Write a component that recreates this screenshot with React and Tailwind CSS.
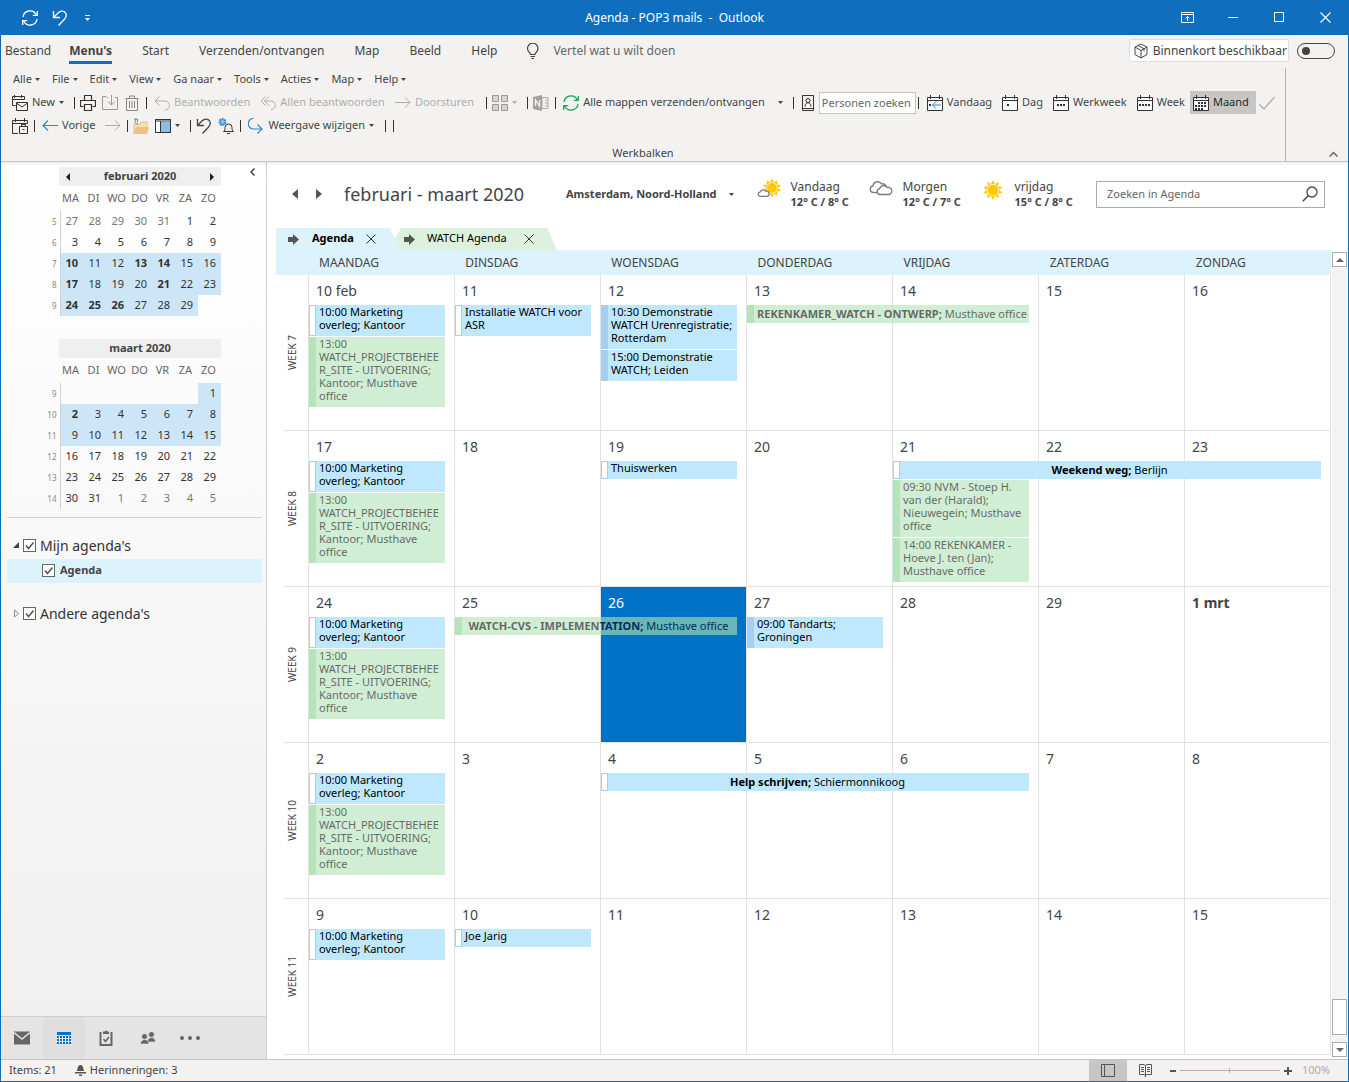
// ===== App.jsx =====
import React, { useState } from 'react';

/* ---------- icons ---------- */

function Icon({ size = 16, children, className = '' }) {
  return (
    <svg
      width={size}
      height={size}
      viewBox="0 0 16 16"
      fill="none"
      stroke="currentColor"
      strokeWidth="1"
      className={`shrink-0 ${className}`}
      aria-hidden="true"
    >
      {children}
    </svg>
  );
}

function Caret({ className = '' }) {
  return (
    <svg width="5" height="3" viewBox="0 0 5 3" className={`shrink-0 ${className}`} aria-hidden="true">
      <path d="M0 0h5L2.5 3z" fill="currentColor" />
    </svg>
  );
}

function SyncIcon({ className = '', size = 16 }) {
  return (
    <Icon size={size} className={className}>
      <g strokeWidth="1.3">
        <path d="M1 7A7 7 0 0 1 14.3 5M15.3 1v4.4h-4.5M15 9A7 7 0 0 1 1.7 11M.7 15v-4.4h4.5" />
      </g>
    </Icon>
  );
}

function UndoIcon({ className = '' }) {
  return (
    <Icon className={className}>
      <path d="M1.5 1v6.500h6.500M1.800 7.200L6 3C8.500.5 12 .5 13.600 3c1.500 2.500.4 4.500-1.200 6.200L6.500 15.500" strokeWidth="1.300" />
    </Icon>
  );
}

// Calendar frame shared by the Vandaag/Dag/Week/Maand buttons
function CalIcon({ children }) {
  return (
    <Icon className="text-[#333]">
      <path d="M1 3h14v12H1z" fill="#fafafa" stroke="none" />
      <path d="M.5 2.500h15v13H.5zM.5 5.500h15M3.500 0v4M12.500 0v4" />
      {children}
    </Icon>
  );
}

const dots = (coords) =>
  coords.map(([x, y]) => <rect key={`${x}-${y}`} x={x} y={y} width="2" height="2" fill="#333" stroke="none" />);

function ReplyIcon({ all }) {
  return (
    <Icon>
      {all && <path d="M5.500 1.500L1 6l4.500 4.500" />}
      <path d={all ? 'M9 1.500L4.500 6 9 10.500M4.500 6H11a4 4 0 0 1 0 8.500' : 'M5.500 1.500L1 6l4.500 4.500M1 6h10a4.200 4.200 0 0 1 0 9'} />
    </Icon>
  );
}

function SunShape({ cx, cy, r }) {
  const rays = Array.from({ length: 10 }, (_, i) => i * 36);
  return (
    <g fill="#ffc805" stroke="none">
      {rays.map((a) => (
        <path key={a} d={`M${cx - 2} ${cy - r}L${cx} ${cy - r - 4}L${cx + 2} ${cy - r}z`} transform={`rotate(${a} ${cx} ${cy})`} />
      ))}
      <circle cx={cx} cy={cy} r={r - 0.5} />
    </g>
  );
}

function WeatherIcon({ kind }) {
  return (
    <svg width="24" height="22" viewBox="0 0 24 22" fill="none" stroke="#777" strokeWidth="1.300" className="shrink-0" aria-hidden="true">
      {kind === 'partly' && (
        <>
          <SunShape cx={15} cy={9} r={5.5} />
          <path d="M3 17.300a2.300 2.300 0 0 1 .3-4.500 3.200 3.200 0 0 1 5.600-.6 2.600 2.600 0 0 1 1.200 5.100z" fill="#fff" />
        </>
      )}
      {kind === 'cloud' && (
        <>
          <path d="M4 13.500a3.300 3.300 0 0 1 0-6.500 4.600 4.600 0 0 1 8.500-2 3.600 3.600 0 0 1 4.800 3.500" />
          <path d="M4 13.500h5" />
          <path d="M10.500 15.500a2.900 2.900 0 0 1 0-5.700 4.300 4.300 0 0 1 7.800-1.300 3.600 3.600 0 0 1 1.800 7z" fill="#fff" />
        </>
      )}
      {kind === 'sun' && <SunShape cx={12} cy={11} r={6} />}
    </svg>
  );
}

/* ---------- title bar + ribbon ---------- */

function TitleBar() {
  return (
    <header className="grid h-[35px] grid-cols-[1fr_auto_1fr] items-center bg-[#106ebe] text-white">
      <div className="flex items-center pl-[21px] pt-px">
        <button aria-label="Synchroniseren" className="mr-3.5"><SyncIcon /></button>
        <button aria-label="Ongedaan maken" className="mr-[17px]"><UndoIcon /></button>
        <button aria-label="Werkbalk aanpassen">
          <svg width="5" height="6" viewBox="0 0 5 6"><path d="M0 0h5v1H0zM0 3h5L2.500 6z" fill="#fff" /></svg>
        </button>
      </div>
      <h1 className="whitespace-pre text-[12px]">Agenda - POP3 mails  -  Outlook</h1>
      <div className="flex justify-end text-white">
        <button aria-label="Lint weergeven" className="flex w-[46px] justify-center">
          <svg width="13" height="11" viewBox="0 0 13 11" fill="none" stroke="#fff"><path d="M.5.5h12v10H.5zM.5 2.500h12M6.500 9V4.500M4.500 6.500l2-2 2 2" /></svg>
        </button>
        <button aria-label="Minimaliseren" className="flex w-[46px] items-center justify-center">
          <svg width="10" height="1"><path d="M0 .5h10" stroke="#fff" /></svg>
        </button>
        <button aria-label="Maximaliseren" className="flex w-[46px] justify-center">
          <svg width="10" height="10" fill="none"><path d="M.5.5h9v9h-9z" stroke="#fff" /></svg>
        </button>
        <button aria-label="Sluiten" className="flex w-[46px] justify-center">
          <svg width="11" height="11" fill="none"><path d="M.5.5l10 10M10.500.5l-10 10" stroke="#fff" strokeWidth="1.100" /></svg>
        </button>
      </div>
    </header>
  );
}

const TABS = ['Start', 'Verzenden/ontvangen', 'Map', 'Beeld', 'Help'];
const MENUS = ['Alle', 'File', 'Edit', 'View', 'Ga naar', 'Tools', 'Acties', 'Map', 'Help'];

function Sep() {
  return (
    <span className="flex w-[6px] justify-center">
      <span className="h-3 w-px bg-[#333]" />
    </span>
  );
}

function Tool({ icon, label, caret, disabled, name, className = '' }) {
  return (
    <button
      aria-label={label ? undefined : name}
      disabled={disabled}
      className={`flex h-[23px] items-center gap-1 whitespace-nowrap ${label ? 'px-[5px]' : 'px-[3px]'} ${disabled ? 'text-[#b0aeac]' : 'text-[#444]'} ${className}`}
    >
      {icon}
      {label}
      {caret && <Caret />}
    </button>
  );
}

function Ribbon() {
  const [soon, setSoon] = useState(false);
  return (
    <section className="relative z-20 border-b border-[#c8c6c4] bg-[#f3f2f1] text-[11px] text-[#444] shadow-[0_1px_4px_rgba(0,0,0,0.12)]">
      <div className="flex h-[33px] items-center pb-0.5 pl-1 pr-[13px] text-[12px]">
        <nav className="flex items-center gap-[30px]">
          <div className="flex gap-[18px]">
            <button>Bestand</button>
            <button className="border-b-[3px] border-[#106ebe] pt-[3px] font-bold leading-5">Menu&apos;s</button>
          </div>
          {TABS.map((t) => <button key={t}>{t}</button>)}
        </nav>
        <label className="ml-7 flex flex-1 items-center gap-3">
          <Icon>
            <path d="M5.500 11.500C5.500 9.500 2.500 9 2.500 5.500a5.200 5.200 0 0 1 10.500 0c0 3.500-3 4-3 6zM5.500 13.500H10M6.500 15.500H9" strokeWidth="1.200" />
          </Icon>
          <input placeholder="Vertel wat u wilt doen" className="w-[180px] bg-transparent outline-none placeholder:text-[#666]" />
        </label>
        <label htmlFor="soon" className="mr-2 flex h-[23px] items-center gap-1 rounded-[2px] border border-[#e1dfdd] bg-white pl-[3px] pr-px">
          <Icon>
            <path d="M8 1l6 3v7.500L8 15l-6-3.500V4zM2 4l6 3.500L14 4M8 7.500V15M5 2.500l6 3.200v2.500" />
          </Icon>
          Binnenkort beschikbaar
        </label>
        <input
          id="soon"
          type="checkbox"
          role="switch"
          checked={soon}
          onChange={(e) => setSoon(e.target.checked)}
          className="h-4 w-[38px] appearance-none rounded-full border border-[#444] pl-1 before:mt-[3px] before:block before:size-2 before:rounded-full before:bg-[#444]"
        />
      </div>

      <div className="flex">
        <div className="min-w-0 flex-1 border-r border-[#b3b0ad]">
          <div className="flex h-[23px] items-center gap-3 pl-3">
            {MENUS.map((m) => (
              <button key={m} className="flex items-center gap-[3px]">{m}<Caret /></button>
            ))}
          </div>

          <div className="flex h-[23px] items-center pl-1.5">
            <Tool label="New" caret icon={
              <Icon className="text-[#333]">
                <path d="M3.500 10.500h-3v-9h12v3M.5 4.500h12M2.500 0v3M9.500 0v3M4.500 7.500h11v8h-11zM4.500 8l5.500 4 5.500-4" />
              </Icon>
            } />
            <span className="w-0.5" />
            <Sep />
            <Tool name="Afdrukken" icon={
              <Icon className="text-[#333]">
                <path d="M3.500 11.500h-3v-6h15v6h-3M4.500 5V.5h7V5M4.500 9.500h7v6h-7z" strokeWidth="1.200" />
              </Icon>
            } />
            <Tool name="Verplaatsen" disabled icon={
              <Icon className="text-[#999]"><path d="M6 2.500H5l-1-1H.5v13h15v-12H13M9.500 0v10M6 6.500l3.500 3.500L13 6.500" /></Icon>
            } />
            <Tool name="Verwijderen" disabled icon={
              <Icon className="text-[#888]"><path d="M2.500 3.500h11v12h-11zM1.500 3.500h13M5.500 3V1h5v2M5.500 6v7M8 6v7M10.500 6v7" /></Icon>
            } />
            <Sep />
            <Tool label="Beantwoorden" disabled icon={<ReplyIcon />} />
            <Tool label="Allen beantwoorden" disabled icon={<ReplyIcon all />} />
            <Tool label="Doorsturen" disabled icon={<Icon><path d="M0 7.500h15M10 2.500l5 5-5 5" /></Icon>} />
            <span className="w-1" />
            <Sep />
            <Tool name="Categorie" disabled caret icon={
              <Icon><path d="M.5.5h6v6h-6zM9.500.5h6v6h-6zM.5 9.500h6v6h-6zM9.500 9.500h6v6h-6z" fill="#d6d4d2" stroke="#999" /></Icon>
            } />
            <span className="w-1" />
            <Sep />
            <Tool name="OneNote" disabled icon={
              <Icon>
                <path d="M9 2.500h6v11H9zM12 5h3M12 8h3M12 11h3" />
                <path d="M0 2l9-2v16l-9-2z" fill="#a3a1a0" stroke="none" />
                <path d="M2.500 11V5l4 6V5" stroke="#f3f2f1" strokeWidth="1.300" />
              </Icon>
            } />
            <Sep />
            <Tool label="Alle mappen verzenden/ontvangen" icon={<SyncIcon className="text-[#21a452]" />} />
            <Caret className="mx-2" />
            <Sep />
            <Tool name="Adresboek" icon={
              <Icon className="text-[#333]">
                <path d="M2.500.5h11v15h-11zM2.500 13.500h11M5 11.500c0-5 6-5 6 0" />
                <circle cx="8" cy="5.500" r="2" />
              </Icon>
            } />
            <input aria-label="Personen zoeken" placeholder="Personen zoeken" className="h-[22px] w-[97px] border border-[#c8c6c4] bg-white px-0.5 outline-none placeholder:text-[#666]" />
            <Sep />
            <Tool label="Vandaag" icon={
              <CalIcon>
                {dots([[2, 9]])}
                <path d="M14 10H5.500M9 6.500L5.500 10 9 13.500" stroke="#2b88d8" />
              </CalIcon>
            } />
            <Tool label="Dag" icon={<CalIcon>{dots([[5, 9]])}</CalIcon>} />
            <Tool label="Werkweek" icon={<CalIcon>{dots([[4, 9], [7, 9], [10, 9]])}</CalIcon>} />
            <Tool label="Week" icon={<CalIcon>{dots([[2, 9], [5, 9], [8, 9], [11, 9]])}</CalIcon>} />
            <Tool label="Maand" className="bg-[#c8c6c4] !pl-[3px] !pr-[7px] !text-[#262626]" icon={
              <CalIcon>{dots([[5, 7], [8, 7], [11, 7], [2, 10], [5, 10], [8, 10], [11, 10], [2, 13], [5, 13], [8, 13]])}</CalIcon>
            } />
            <Tool name="Gereed" disabled icon={<Icon><path d="M0 9l5 5L15.500 2" strokeWidth="1.300" /></Icon>} />
          </div>

          <div className="flex h-[23px] items-center pl-2">
            <Tool name="Afspraak" icon={
              <Icon className="text-[#333]">
                <path d="M6 15.500H.5v-13h15v3M.5 5.500h15M3.500 0v4M12.500 0v4M7.500 8.500h8v7h-8zM9.500 8.500v-2h4v2M10.500 11.500h2" />
              </Icon>
            } />
            <Sep />
            <Tool label="Vorige" icon={<Icon className="text-[#2b88d8]"><path d="M16 7.500H1M6 2.500l-5 5 5 5" strokeWidth="1.200" /></Icon>} />
            <Tool name="Volgende" disabled className="ml-0.5" icon={<Icon><path d="M0 7.500h15M10 2.500l5 5-5 5" /></Icon>} />
            <Sep />
            <Tool name="Map openen" icon={
              <Icon>
                <path d="M1 6v9h13V4H8L6.500 6z" fill="#f7dfb0" stroke="#eac282" />
                <path d="M3 9h13l-2 7H0z" fill="#eac282" stroke="none" />
                <path d="M5 6C2 6 1.500 3 3 1M1 1h3.500v3" stroke="#4c9a73" />
              </Icon>
            } />
            <Tool name="Leesvenster" caret icon={
              <Icon className="text-[#333]">
                <path d="M.5 1.500h15v13H.5z" fill="#fff" />
                <path d="M6 4h9v10H6z" fill="#83beec" stroke="none" />
                <path d="M.5 1.500h15v13H.5zM1 3h14M5.500 3v11" />
              </Icon>
            } />
            <span className="w-1" />
            <Sep />
            <Tool name="Ongedaan maken" icon={<UndoIcon />} />
            <Tool name="Herinneringen" icon={
              <Icon className="text-[#333]">
                <circle cx="4.500" cy="4" r="3" stroke="#2b88d8" strokeWidth="2" strokeDasharray="1.800 .8" fill="#83beec" />
                <path d="M5.500 13.500c1.500-1 1.500-2 1.500-4a3.500 3.500 0 0 1 7 0c0 2 0 3 1.500 4zM9 15.500h3" fill="#f3f2f1" />
              </Icon>
            } />
            <Sep />
            <Tool label="Weergave wijzigen" caret icon={
              <Icon className="text-[#2b88d8]"><path d="M5.500.5a4.500 4.500 0 0 0 0 10.500H14M9.500 6.500L14 11l-4.500 4.500" strokeWidth="1.200" /></Icon>
            } />
            <span className="flex gap-0.5 pl-1"><Sep /><Sep /></span>
          </div>

          <p className="mt-2 h-4 text-center text-[11px] leading-4">Werkbalken</p>
        </div>
        <div className="flex w-[62px] items-end justify-end pb-1 pr-2.5">
          <button aria-label="Lint samenvouwen">
            <svg width="9" height="6" fill="none"><path d="M.5 5.500l4-4 4 4" stroke="#666" strokeWidth="1.500" /></svg>
          </button>
        </div>
      </div>
    </section>
  );
}

/* ---------- sidebar ---------- */

const WEEKDAYS = ['MA', 'DI', 'WO', 'DO', 'VR', 'ZA', 'ZO'];

const FEB = [
  { week: 5, days: [27, 28, 29, 30, 31, 1, 2], out: [0, 1, 2, 3, 4] },
  { week: 6, days: [3, 4, 5, 6, 7, 8, 9] },
  { week: 7, days: [10, 11, 12, 13, 14, 15, 16], sel: true, bold: [0, 3, 4] },
  { week: 8, days: [17, 18, 19, 20, 21, 22, 23], sel: true, bold: [0, 4] },
  { week: 9, days: [24, 25, 26, 27, 28, 29, ''], sel: true, bold: [0, 1, 2] },
];

const MRT = [
  { week: 9, days: ['', '', '', '', '', '', 1], sel: true },
  { week: 10, days: [2, 3, 4, 5, 6, 7, 8], sel: true, bold: [0] },
  { week: 11, days: [9, 10, 11, 12, 13, 14, 15], sel: true },
  { week: 12, days: [16, 17, 18, 19, 20, 21, 22] },
  { week: 13, days: [23, 24, 25, 26, 27, 28, 29] },
  { week: 14, days: [30, 31, 1, 2, 3, 4, 5], out: [2, 3, 4, 5, 6] },
];

function MiniMonth({ title, weeks, nav }) {
  return (
    <div className="pl-[38px] text-[11px] text-[#333]">
      <div className="ml-5 flex h-[19px] w-[162px] items-center justify-between bg-[#efefef] px-[7px] font-bold text-[#444]">
        {nav ? <button aria-label="Vorige maand"><svg width="4" height="8"><path d="M4 0v8L0 4z" fill="#222" /></svg></button> : <span />}
        <span>{title}</span>
        {nav ? <button aria-label="Volgende maand"><svg width="4" height="8"><path d="M0 0v8l4-4z" fill="#222" /></svg></button> : <span />}
      </div>
      <table className="w-[182px] table-fixed border-collapse">
        <thead>
          <tr className="h-[25px] text-[#666]">
            <th className="w-[21px]" />
            {WEEKDAYS.map((d) => <th key={d} className="w-[23px] pr-0.5 text-center font-normal">{d}</th>)}
          </tr>
        </thead>
        <tbody>
          {weeks.map((w) => (
            <tr key={w.week} className="h-[21px]">
              <th className="border-r border-[#d0d0d0] pr-[3px] text-right text-[8px] font-normal text-[#888]">{w.week}</th>
              {w.days.map((d, i) => (
                <td
                  key={i}
                  className={`pr-[5px] text-right ${w.sel && d !== '' ? 'bg-[#cde6f7]' : ''} ${w.bold?.includes(i) ? 'font-bold' : ''} ${w.out?.includes(i) ? 'text-[#777]' : ''}`}
                >
                  {d}
                </td>
              ))}
            </tr>
          ))}
        </tbody>
      </table>
    </div>
  );
}

function CheckBox({ id }) {
  const [on, setOn] = useState(true);
  return (
    <span className="grid size-[13px] shrink-0">
      <input
        id={id}
        type="checkbox"
        checked={on}
        onChange={(e) => setOn(e.target.checked)}
        className="col-start-1 row-start-1 size-[13px] appearance-none border border-[#666] bg-white"
      />
      {on && (
        <svg width="13" height="13" fill="none" className="pointer-events-none col-start-1 row-start-1" aria-hidden="true">
          <path d="M3 6.500l2.500 3L10.500 3.500" stroke="#555" strokeWidth="1.500" />
        </svg>
      )}
    </span>
  );
}

function Sidebar() {
  return (
    <aside className="flex w-[266px] shrink-0 flex-col border-r border-[#d0d0d0] bg-linear-to-b from-white to-[#efefef]">
      <div className="flex items-start justify-between">
        <div className="flex flex-col gap-[23px] pt-[5px]">
          <MiniMonth title="februari 2020" weeks={FEB} nav />
          <MiniMonth title="maart 2020" weeks={MRT} />
        </div>
        <button aria-label="Mappenvenster minimaliseren" className="mr-[11px] mt-1.5">
          <svg width="5" height="8" fill="none"><path d="M4.500 .5L1 4l3.500 3.500" stroke="#444" strokeWidth="1.500" /></svg>
        </button>
      </div>

      <div className="ml-1.5 mr-1 mt-2 flex-1 border-t border-[#d0d0d0] pt-[15px] text-[14px] text-[#333]">
        <div className="flex h-[26px] items-center gap-1 pb-0.5 pl-1.5">
          <svg width="6" height="6"><path d="M6 0v6H0z" fill="#444" /></svg>
          <CheckBox id="mine" />
          <label htmlFor="mine">Mijn agenda&apos;s</label>
        </div>
        <div className="flex h-6 items-center gap-[5px] bg-[#dcf2fd] pb-px pl-[35px] text-[11px] font-bold text-[#444]">
          <CheckBox id="agenda" />
          <label htmlFor="agenda">Agenda</label>
        </div>
        <div className="mt-[18px] flex h-[26px] items-center gap-1 pb-0.5 pl-1.5">
          <svg width="6" height="9" fill="none"><path d="M1.500 1v7L5.500 4.500z" stroke="#888" /></svg>
          <CheckBox id="other" />
          <label htmlFor="other">Andere agenda&apos;s</label>
        </div>
      </div>

      <nav className="flex h-[43px] border-t border-[#d0d0d0] bg-[#e4e4e4] text-[#666]">
        <button aria-label="E-mail" className="flex w-[42px] items-center justify-center">
          <Icon><path d="M0 1.500h16v13H0z" fill="#666" stroke="none" /><path d="M0 2.500l8 6.500 8-6.500" stroke="#e4e4e4" strokeWidth="1.500" /></Icon>
        </button>
        <button aria-label="Agenda" className="flex w-[42px] items-center justify-center bg-[#dfdfdf]">
          <svg width="14" height="12" fill="#0072c6">
            <path d="M0 0h14v3H0z" />
            {[4, 7, 10].map((y) => [0, 3, 6, 9, 12].map((x) => <rect key={`${x}-${y}`} x={x} y={y} width="2" height="2" />))}
          </svg>
        </button>
        <button aria-label="Taken" className="flex w-[42px] items-center justify-center">
          <Icon>
            <path d="M2.500 2v13h11V2" strokeWidth="2" />
            <path d="M5 4V1.500h2a1 1 0 0 1 2 0h2V4z" fill="#666" stroke="none" />
            <path d="M5.500 9l2 2.500L11 7" strokeWidth="1.500" />
          </Icon>
        </button>
        <button aria-label="Personen" className="flex w-[42px] items-center justify-center">
          <Icon>
            <g fill="#666" stroke="#e4e4e4" strokeWidth=".6">
              <circle cx="11.500" cy="4.500" r="2.800" /><path d="M7.500 12c0-6 8-6 8 0z" />
              <circle cx="4.500" cy="6.500" r="2.800" /><path d="M.5 14c0-6 8.500-6 8.500 0z" />
            </g>
          </Icon>
        </button>
        <button aria-label="Meer" className="flex w-[42px] items-center justify-center">
          <svg width="20" height="4" fill="#666"><circle cx="2" cy="2" r="2" /><circle cx="10" cy="2" r="2" /><circle cx="18" cy="2" r="2" /></svg>
        </button>
      </nav>
    </aside>
  );
}

/* ---------- calendar ---------- */

const DAYNAMES = ['MAANDAG', 'DINSDAG', 'WOENSDAG', 'DONDERDAG', 'VRIJDAG', 'ZATERDAG', 'ZONDAG'];

const marketing = { text: '10:00 Marketing\noverleg; Kantoor', kind: 'free' };
const project = {
  text: '13:00\nWATCH_PROJECTBEHEE\nR_SITE - UITVOERING;\nKantoor; Musthave\noffice',
  kind: 'green',
};
const monday = { place: 'col-start-1 row-span-2', events: [marketing, project] };

const WEEKS = [
  {
    name: 'WEEK 7',
    days: ['10 feb', '11', '12', '13', '14', '15', '16'],
    lanes: [
      monday,
      { place: 'col-start-2 row-span-2', events: [{ text: 'Installatie WATCH voor\nASR', kind: 'free' }] },
      {
        place: 'col-start-3 row-span-2',
        events: [
          { text: '10:30 Demonstratie\nWATCH Urenregistratie;\nRotterdam', kind: 'busy' },
          { text: '15:00 Demonstratie\nWATCH; Leiden', kind: 'busy' },
        ],
      },
      { place: 'col-start-4 col-span-2', events: [{ title: 'REKENKAMER_WATCH - ONTWERP;', text: ' Musthave office', kind: 'green' }] },
    ],
  },
  {
    name: 'WEEK 8',
    days: ['17', '18', '19', '20', '21', '22', '23'],
    lanes: [
      monday,
      { place: 'col-start-3 row-span-2', events: [{ text: 'Thuiswerken', kind: 'free' }] },
      { place: 'col-start-5 col-span-3', events: [{ title: 'Weekend weg;', text: ' Berlijn', kind: 'free', center: true }] },
      {
        place: 'col-start-5 row-start-2',
        events: [
          { text: '09:30 NVM - Stoep H.\nvan der (Harald);\nNieuwegein; Musthave\noffice', kind: 'green' },
          { text: '14:00 REKENKAMER -\nHoeve J. ten (Jan);\nMusthave office', kind: 'green' },
        ],
      },
    ],
  },
  {
    name: 'WEEK 9',
    days: ['24', '25', '26', '27', '28', '29', '1 mrt'],
    today: 2,
    lanes: [
      monday,
      { place: 'col-start-2 col-span-2', events: [{ title: 'WATCH-CVS - IMPLEMENTATION;', text: ' Musthave office', kind: 'green', center: true }] },
      { place: 'col-start-4 row-span-2', events: [{ text: '09:00 Tandarts;\nGroningen', kind: 'busy' }] },
    ],
  },
  {
    name: 'WEEK 10',
    days: ['2', '3', '4', '5', '6', '7', '8'],
    lanes: [
      monday,
      { place: 'col-start-3 col-span-3', events: [{ title: 'Help schrijven;', text: ' Schiermonnikoog', kind: 'free', center: true }] },
    ],
  },
  {
    name: 'WEEK 11',
    days: ['9', '10', '11', '12', '13', '14', '15'],
    lanes: [
      { place: 'col-start-1 row-span-2', events: [marketing] },
      { place: 'col-start-2 row-span-2', events: [{ text: 'Joe Jarig', kind: 'free' }] },
    ],
  },
];

const KINDS = {
  free: { box: 'bg-[#bfe8fe]', bar: 'border border-[#a6cdf2] bg-white' },
  busy: { box: 'bg-[#bfe8fe]', bar: 'bg-[#a6cdf2]' },
  green: { box: 'bg-[#b1e3b6] opacity-60', bar: 'bg-[#87d28c]' },
};

function Event({ event }) {
  const kind = KINDS[event.kind];
  return (
    <article className={`flex text-[11px] leading-[13px] text-black ${kind.box}`}>
      <span className={`w-[7px] shrink-0 ${kind.bar}`} />
      <p
        className={`mr-px min-w-0 flex-1 overflow-hidden whitespace-pre pl-[3px] ${event.title ? 'py-[3px] leading-3' : 'pb-[5px]'} ${event.center ? 'pr-1 text-center' : ''}`}
      >
        {event.title && <b>{event.title}</b>}
        {event.text}
      </p>
    </article>
  );
}

function Week({ week }) {
  return (
    <div className="grid min-h-[156px] grid-cols-[25px_1fr] border-b border-r border-[#e1e1e1]">
      <div className="row-start-1 flex items-center justify-center pr-1.5">
        <span className="rotate-180 text-[10px] text-[#444] [writing-mode:vertical-rl]">{week.name}</span>
      </div>
      <div className="col-start-2 row-start-1 grid grid-cols-7">
        {week.days.map((d, i) => (
          <div
            key={d}
            className={`border-l border-[#e1e1e1] pl-[7px] pt-1.5 text-[14px] leading-5 ${week.today === i ? 'bg-[#0072c6] text-white' : 'text-[#444]'} ${d.includes('mrt') ? 'font-bold' : ''}`}
          >
            {d}
          </div>
        ))}
      </div>
      <div className="col-start-2 row-start-1 grid grid-cols-7 grid-rows-[19px_1fr] pt-[30px]">
        {week.lanes.map((lane) => (
          <div key={lane.place} className={`flex min-w-0 flex-col gap-px pl-px pr-[9px] ${lane.place.includes('row-start') ? '' : 'row-start-1'} ${lane.place}`}>
            {lane.events.map((e) => <Event key={e.text} event={e} />)}
          </div>
        ))}
      </div>
    </div>
  );
}

function TabArrow() {
  return (
    <svg width="11" height="11" aria-hidden="true"><path d="M0 3h5V0l6 5.500L5 11V8H0z" fill="#555" /></svg>
  );
}

function CloseX() {
  return (
    <svg width="10" height="10" fill="none"><path d="M.5.5l9 9M9.500.5l-9 9" stroke="#333" /></svg>
  );
}

const WEATHER = [
  { day: 'Vandaag', temp: '12° C / 8° C', kind: 'partly' },
  { day: 'Morgen', temp: '12° C / 7° C', kind: 'cloud' },
  { day: 'vrijdag', temp: '15° C / 8° C', kind: 'sun' },
];

function CalendarHeader() {
  return (
    <div className="flex h-[66px] items-center pb-0.5 pl-[25px] pr-[23px]">
      <button aria-label="Vorige periode" className="mr-[18px]"><svg width="6" height="10"><path d="M6 0v10L0 5z" fill="#555" /></svg></button>
      <button aria-label="Volgende periode" className="mr-[22px]"><svg width="6" height="10"><path d="M0 0v10l6-5z" fill="#555" /></svg></button>
      <h2 className="w-[222px] whitespace-nowrap text-[18px] text-[#444]">februari - maart 2020</h2>
      <button className="flex items-center gap-3 whitespace-nowrap text-[11px] font-bold text-[#444]">Amsterdam, Noord-Holland <Caret /></button>
      <div className="ml-[23px] flex">
        {WEATHER.map((w) => (
          <div key={w.day} className="flex w-[112px] gap-2.5 whitespace-nowrap">
            <WeatherIcon kind={w.kind} />
            <div className="text-[12px] leading-[15px] text-[#444]">
              <div>{w.day}</div>
              <div className="text-[11px] font-bold">{w.temp}</div>
            </div>
          </div>
        ))}
      </div>
      <div className="ml-auto flex h-[27px] w-[229px] items-center border border-[#a3acba] pl-2.5 pr-1.5">
        <input aria-label="Zoeken in Agenda" placeholder="Zoeken in Agenda" className="min-w-0 flex-1 text-[11px] outline-none placeholder:text-[#666]" />
        <button aria-label="Zoeken">
          <Icon><circle cx="10" cy="6" r="5" strokeWidth="1.300" stroke="#444" /><path d="M6.500 9.500L.8 15.200" stroke="#444" strokeWidth="1.500" /></Icon>
        </button>
      </div>
    </div>
  );
}

function Calendar() {
  return (
    <main className="flex min-w-0 flex-1 flex-col bg-white">
      <CalendarHeader />
      <div className="flex flex-1">
        <div className="flex min-w-0 flex-1 flex-col pl-[9px]">
          <div className="flex h-[22px] text-[11px] text-black">
            <div className="relative z-10 flex w-[124px] items-center bg-[#dcf2fd] pl-3 [clip-path:polygon(0_0,114px_0,100%_100%,0_100%)]">
              <TabArrow />
              <span className="ml-[13px] w-[54px] pb-px font-bold">Agenda</span>
              <button aria-label="Agenda sluiten"><CloseX /></button>
            </div>
            <div className="-ml-[5px] flex w-[162px] items-center bg-[#dcf1de] pl-[9px] [clip-path:polygon(6px_0,152px_0,100%_100%,5px_100%,0_50%)]">
              <TabArrow />
              <span className="ml-3 w-[97px] pb-px">WATCH Agenda</span>
              <button aria-label="WATCH Agenda sluiten"><CloseX /></button>
            </div>
          </div>
          <div className="grid h-[25px] grid-cols-7 items-center bg-[#dcf2fd] pl-8 text-[12px] text-[#444]">
            {DAYNAMES.map((d) => <span key={d} className="pl-[11px]">{d}</span>)}
          </div>
          <div className="mb-1 grid flex-1 auto-rows-fr pl-[7px]">
            {WEEKS.map((w) => <Week key={w.name} week={w} />)}
          </div>
        </div>
        <div className="mb-0.5 ml-px mr-px mt-6 flex w-[15px] flex-col bg-[#f3f3f3]">
          <button aria-label="Omhoog" className="flex h-[15px] items-center justify-center border border-[#ababab] bg-white">
            <svg width="8" height="4"><path d="M0 4h8L4 0z" fill="#666" /></svg>
          </button>
          <div className="flex flex-1 flex-col justify-end pb-[7px]">
            <div className="h-9 border border-[#ababab] bg-white" />
          </div>
          <button aria-label="Omlaag" className="flex h-[15px] items-center justify-center border border-[#ababab] bg-white">
            <svg width="8" height="4"><path d="M0 0h8L4 4z" fill="#666" /></svg>
          </button>
        </div>
      </div>
    </main>
  );
}

function StatusBar() {
  return (
    <footer className="flex h-[22px] items-center border-t border-[#c8c6c4] bg-[#f3f2f1] pl-2 text-[11px] text-[#444]">
      <span>Items: 21</span>
      <svg width="11" height="11" fill="#555" className="ml-[18px] mr-1" aria-hidden="true">
        <path d="M1.500 6c1.500-1 .5-6 4-6s2.500 5 4 6zM0 7h11v1.500H0zM4 9.500h3V11H4z" />
      </svg>
      <span>Herinneringen: 3</span>
      <div className="ml-auto flex h-full items-center">
        <button aria-label="Normaal" className="flex h-full w-[38px] items-center justify-center bg-[#c8c6c4]">
          <svg width="14" height="13" fill="none"><path d="M.5.5h13v12H.5zM3.500.5v12" stroke="#555" /></svg>
        </button>
        <button aria-label="Lezen" className="flex h-full w-[38px] items-center justify-center">
          <svg width="13" height="13" fill="none"><path d="M6.500 1.500L5 .5H.5v10H5l1.500 1L8 10.500h4.500V.5H8zM6.500 1.500V13M2 3.500h3M2 5.500h3M2 7.500h3M8 3.500h3M8 5.500h3M8 7.500h3" stroke="#555" /></svg>
        </button>
        <button aria-label="Uitzoomen" className="ml-[5px]"><svg width="6" height="2"><path d="M0 0h6v2H0z" fill="#555" /></svg></button>
        <input
          type="range"
          aria-label="Zoom"
          defaultValue="50"
          className="mx-1 h-px w-[100px] appearance-none bg-[#b3b0ad] [&::-webkit-slider-thumb]:h-[5px] [&::-webkit-slider-thumb]:w-px [&::-webkit-slider-thumb]:appearance-none [&::-webkit-slider-thumb]:bg-[#b3b0ad]"
        />
        <button aria-label="Inzoomen"><svg width="8" height="8"><path d="M3 0h2v3h3v2H5v3H3V5H0V3h3z" fill="#555" /></svg></button>
        <span className="ml-2.5 mr-[18px] text-[#aaa]">100%</span>
      </div>
    </footer>
  );
}

export default function App() {
  return (
    <div className="flex min-h-screen flex-col border-x border-b border-[#106ebe] bg-white font-['Noto_Sans','Open_Sans',sans-serif]">
      <TitleBar />
      <Ribbon />
      <div className="flex flex-1">
        <Sidebar />
        <Calendar />
      </div>
      <StatusBar />
    </div>
  );
}
